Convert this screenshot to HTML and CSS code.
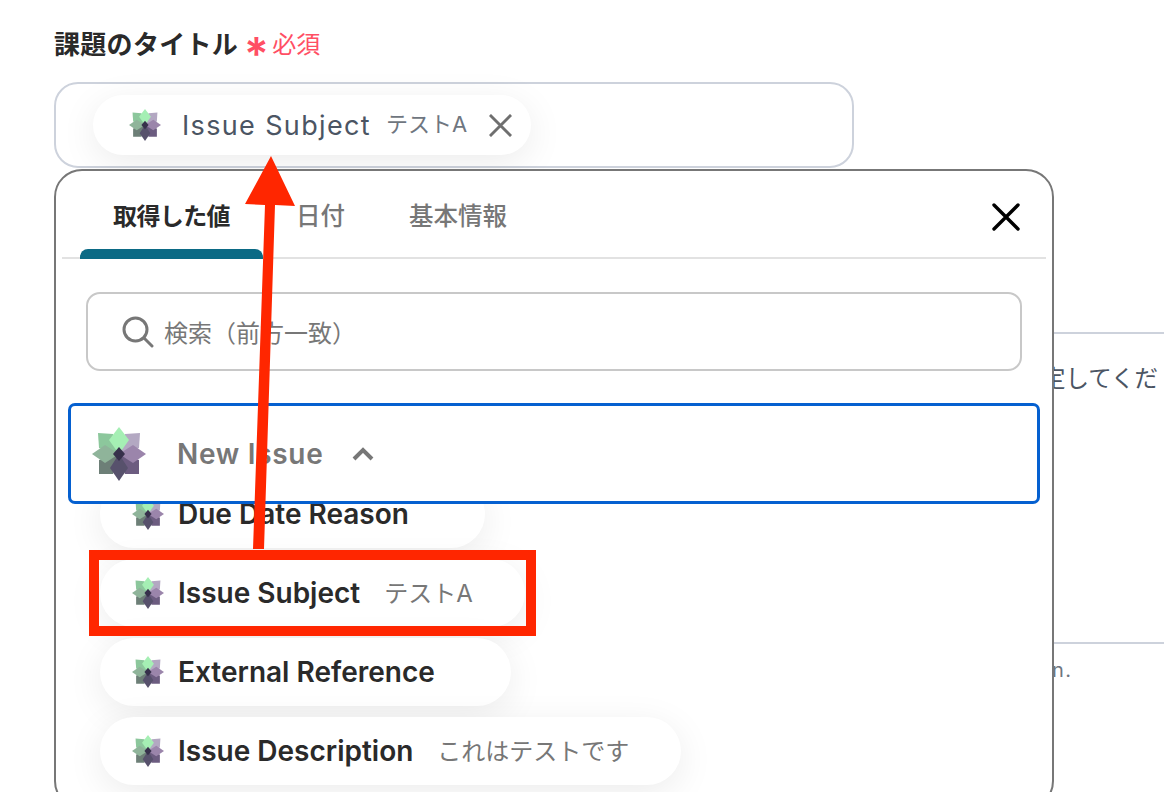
FILE: index.html
```html
<!DOCTYPE html>
<html lang="ja">
<head>
    <meta charset="UTF-8">
    <meta name="viewport" content="width=device-width, initial-scale=1.0">
    <title>課題のタイトル</title>
    <link rel="stylesheet" href="styles.css">
</head>
<body>

    <svg class="defs" width="0" height="0">
        <defs>
            <symbol id="logo" viewBox="0 0 54 54">
                <polygon points="6,6 21,7 27,27 7,21" fill="#8cc79c"/>
                <polygon points="48,6 33,7 27,27 47,21" fill="#b3a8c2"/>
                <polygon points="7,47 7,33 27,27 21,47" fill="#6d7f77"/>
                <polygon points="47,47 47,33 27,27 33,47" fill="#6c5c80"/>
                <polygon points="27,0 37,13 27,27 17,13" fill="#a5efb4"/>
                <polygon points="0,27 13,18 27,27 13,36" fill="#8fb49a"/>
                <polygon points="54,27 41,18 27,27 41,36" fill="#9b85ab"/>
                <polygon points="27,54 36,41 27,27 18,41" fill="#57516c"/>
                <polygon points="27,20 33,27 27,34 21,27" fill="#37304b"/>
            </symbol>
        </defs>
    </svg>

    <main class="page">
        <div class="field-label">
            <span>課題のタイトル</span>
            <span class="star">*</span>
            <span class="required">必須</span>
        </div>

        <div class="field-input">
            <div class="chip chip-selected">
                <svg class="logo"><use href="#logo"/></svg>
                <span class="chip-name">Issue Subject</span>
                <span class="chip-value">テストA</span>
                <svg class="chip-close" viewBox="0 0 24 24">
                    <path d="M1 1 L23 23 M23 1 L1 23"/>
                </svg>
            </div>
        </div>

        <section class="behind behind-one">
            <p>定してくだ</p>
        </section>
        <section class="behind behind-two">
            <p>n.</p>
        </section>
    </main>

    <!-- Value picker -->
    <div class="picker">
        <div class="tabs">
            <div class="tab active">取得した値</div>
            <div class="tab">日付</div>
            <div class="tab">基本情報</div>
            <svg class="picker-close" viewBox="0 0 28 28">
                <path d="M2 2 L26 26 M26 2 L2 26"/>
            </svg>
        </div>

        <div class="search">
            <svg class="search-icon" viewBox="0 0 32 32">
                <circle cx="13.5" cy="13.5" r="11.5"/>
                <path d="M22 22 L30 30"/>
            </svg>
            <span>検索（前方一致）</span>
        </div>

        <div class="group-header">
            <svg class="logo-big"><use href="#logo"/></svg>
            <span class="group-name">New Issue</span>
            <svg class="chevron" viewBox="0 0 22 14">
                <path d="M2 12 L11 3 L20 12"/>
            </svg>
        </div>

        <div class="list">
            <div class="chip chip-row due">
                <svg class="logo"><use href="#logo"/></svg>
                <span class="row-name">Due Date Reason</span>
            </div>
            <div class="chip chip-row subject">
                <svg class="logo"><use href="#logo"/></svg>
                <span class="row-name">Issue Subject</span>
                <span class="row-value">テストA</span>
            </div>
            <div class="chip chip-row external">
                <svg class="logo"><use href="#logo"/></svg>
                <span class="row-name">External Reference</span>
            </div>
            <div class="chip chip-row description">
                <svg class="logo"><use href="#logo"/></svg>
                <span class="row-name">Issue Description</span>
                <span class="row-value">これはテストです</span>
            </div>
        </div>
    </div>

    <!-- Red annotation drawn over the screenshot -->
    <svg class="annotation" width="1164" height="792" viewBox="0 0 1164 792">
        <rect x="94" y="555" width="437" height="76"/>
        <polygon points="253,549 264,549 275,205 295,206 271,156 245,204 265,205"/>
    </svg>

</body>
</html>
```

FILE: styles.css
```css
* {
    box-sizing: border-box;
}

html, body {
    margin: 0;
    height: 100%;
    overflow: hidden;
}

body {
    position: relative;
    background-color: #ffffff;
    color: #222222;
    font-family: Inter, "Noto Sans CJK JP", sans-serif;
}

.defs {
    display: block;
    height: 0;
}

.page {
    padding: 24px 0 0 54px;
}

/* Field */
.field-label {
    display: flex;
    align-items: center;
    height: 36px;
    font-size: 26px;
    font-weight: 600;
    letter-spacing: 0.3px;
    color: #2a2a2a;
    white-space: nowrap;
}

.star {
    margin-left: 6px;
    height: 36px;
    font-size: 46px;
    line-height: 60px;
    font-weight: 600;
    color: #ff4f64;
}

.required {
    margin-left: 3px;
    font-size: 24px;
    font-weight: 400;
    letter-spacing: 0;
    color: #ff4f64;
}

.field-input {
    width: 800px;
    height: 86px;
    margin-top: 22px;
    padding: 11px 0 0 37px;
    border: 2px solid #cdd2dc;
    border-radius: 24px;
}

/* Chips */
.chip {
    display: flex;
    align-items: center;
    background-color: #ffffff;
    border-radius: 34px;
    white-space: nowrap;
    box-shadow: 0 8px 36px rgba(0, 0, 0, 0.08);
}

.chip-selected {
    width: 438px;
    height: 60px;
    padding-left: 36px;
}

.logo {
    width: 32px;
    height: 32px;
    flex: none;
}

.chip-name {
    margin-left: 21px;
    font-size: 27px;
    letter-spacing: 1.35px;
    color: #4b5563;
}

.chip-value {
    margin-left: 15px;
    font-size: 22px;
    line-height: 30px;
    margin-top: -3px;
    color: #6f7680;
}

.chip-close {
    width: 23px;
    height: 23px;
    margin-left: 22px;
    fill: none;
    stroke: #6f6f6f;
    stroke-width: 3;
}

/* Page content that the picker covers */
.behind {
    border-top: 2px solid #cdd2dc;
    color: #4b5563;
    white-space: nowrap;
}

.behind p {
    margin: 0;
}

.behind-one {
    margin: 164px 0 0 946px;
    height: 310px;
    padding: 26px 0 0 42px;
    font-size: 23.5px;
}

.behind-two {
    margin-left: 946px;
    padding: 14px 0 0 52px;
    font-size: 20px;
    letter-spacing: 1.5px;
    color: #6f7680;
}

/* Value picker */
.picker {
    position: absolute;
    z-index: 1;
    top: 169px;
    left: 54px;
    width: 1000px;
    height: 640px;
    background-color: #ffffff;
    border: 2px solid #777777;
    border-radius: 28px;
}

.tabs {
    display: flex;
    align-items: center;
    height: 88px;
    margin: 0 6px;
    padding-left: 18px;
    border-bottom: 2px solid #e2e2e2;
}

.tab {
    position: relative;
    display: flex;
    align-items: center;
    height: 88px;
    padding: 0 32px;
    font-size: 24.5px;
    font-weight: 500;
    color: #777777;
    white-space: nowrap;
}

.tab.active {
    margin-right: 1px;
    padding: 0 33px;
    font-size: 24px;
    font-weight: 700;
    letter-spacing: -0.6px;
    color: #2a2a2a;
}

.tab.active::after {
    content: "";
    position: absolute;
    left: 0;
    right: 0;
    bottom: -1px;
    height: 10px;
    background-color: #0b6a85;
    border-radius: 8px 8px 0 0;
}

.picker-close {
    width: 28px;
    height: 28px;
    margin: 6px 26px 0 auto;
    fill: none;
    stroke: #000000;
    stroke-width: 3.4;
    stroke-linecap: round;
}

.search {
    display: flex;
    align-items: center;
    height: 79px;
    margin: 33px 30px 0;
    padding-left: 34px;
    border: 2px solid #c8c8c8;
    border-radius: 14px;
    font-size: 24px;
    color: #777777;
}

.search-icon {
    width: 32px;
    height: 32px;
    margin-right: 10px;
    fill: none;
    stroke: #777777;
    stroke-width: 3;
    stroke-linecap: round;
}

.group-header {
    position: relative;
    z-index: 1;
    display: flex;
    align-items: center;
    height: 101px;
    margin: 32px 12px 0;
    padding-left: 21px;
    background-color: #ffffff;
    border: 3px solid #0560d0;
    border-radius: 7px;
}

.logo-big {
    width: 54px;
    height: 54px;
}

.group-name {
    margin-left: 31px;
    font-size: 28px;
    font-weight: 600;
    letter-spacing: 0.7px;
    color: #777777;
}

.chevron {
    width: 22px;
    height: 14px;
    margin-left: 29px;
    fill: none;
    stroke: #777777;
    stroke-width: 4;
}

.list {
    display: flex;
    flex-direction: column;
    align-items: flex-start;
    gap: 11px;
    margin: -24px 0 0 44px;
}

.chip-row {
    height: 68px;
    padding-left: 32px;
}

.due { width: 385px; }
.subject { width: 425px; }
.external { width: 411px; }
.description { width: 581px; }

.row-name {
    margin-left: 14px;
    font-size: 28px;
    font-weight: 600;
    color: #2a2a2a;
}

.row-value {
    margin-left: 24px;
    margin-top: -4px;
    font-size: 24px;
    color: #777777;
}

/* Annotation */
.annotation {
    position: absolute;
    z-index: 2;
    top: 0;
    left: 0;
}

.annotation rect {
    fill: none;
    stroke: #ff2600;
    stroke-width: 10;
}

.annotation polygon {
    fill: #ff2600;
}
```
